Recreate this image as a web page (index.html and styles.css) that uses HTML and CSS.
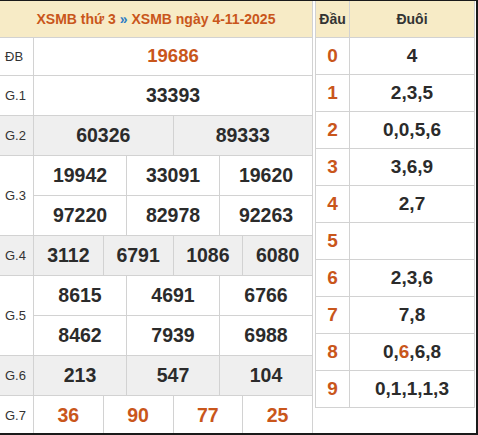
FILE: index.html
```html
<!DOCTYPE html>
<html>
<head>
<meta charset="utf-8">
<link rel="stylesheet" href="styles.css">
</head>
<body>
<div class="frame">
  <table class="kq">
    <colgroup>
      <col class="c-lbl">
      <col><col><col><col><col><col><col><col><col><col><col><col>
    </colgroup>
    <tr class="head"><th colspan="13">XSMB thứ 3 <span class="sep">»</span> XSMB ngày 4-11-2025</th></tr>
    <tr class="r-db"><td class="lbl">ĐB</td><td colspan="12" class="num red db">19686</td></tr>
    <tr><td class="lbl">G.1</td><td colspan="12" class="num">33393</td></tr>
    <tr class="gray"><td class="lbl">G.2</td><td colspan="6" class="num">60326</td><td colspan="6" class="num">89333</td></tr>
    <tr><td class="lbl" rowspan="2">G.3</td><td colspan="4" class="num">19942</td><td colspan="4" class="num">33091</td><td colspan="4" class="num">19620</td></tr>
    <tr><td colspan="4" class="num">97220</td><td colspan="4" class="num">82978</td><td colspan="4" class="num">92263</td></tr>
    <tr class="gray"><td class="lbl">G.4</td><td colspan="3" class="num">3112</td><td colspan="3" class="num">6791</td><td colspan="3" class="num">1086</td><td colspan="3" class="num">6080</td></tr>
    <tr><td class="lbl" rowspan="2">G.5</td><td colspan="4" class="num">8615</td><td colspan="4" class="num">4691</td><td colspan="4" class="num">6766</td></tr>
    <tr><td colspan="4" class="num">8462</td><td colspan="4" class="num">7939</td><td colspan="4" class="num">6988</td></tr>
    <tr class="gray"><td class="lbl">G.6</td><td colspan="4" class="num">213</td><td colspan="4" class="num">547</td><td colspan="4" class="num">104</td></tr>
    <tr><td class="lbl">G.7</td><td colspan="3" class="num red">36</td><td colspan="3" class="num red">90</td><td colspan="3" class="num red">77</td><td colspan="3" class="num red">25</td></tr>
  </table>
  <table class="loto">
    <colgroup><col class="c-dau"><col></colgroup>
    <tr class="head"><th>Đầu</th><th>Đuôi</th></tr>
    <tr><td class="dau">0</td><td class="duoi">4</td></tr>
    <tr><td class="dau">1</td><td class="duoi">2,3,5</td></tr>
    <tr><td class="dau">2</td><td class="duoi">0,0,5,6</td></tr>
    <tr><td class="dau">3</td><td class="duoi">3,6,9</td></tr>
    <tr><td class="dau">4</td><td class="duoi">2,7</td></tr>
    <tr><td class="dau">5</td><td class="duoi"></td></tr>
    <tr><td class="dau">6</td><td class="duoi">2,3,6</td></tr>
    <tr><td class="dau">7</td><td class="duoi">7,8</td></tr>
    <tr><td class="dau">8</td><td class="duoi">0,<span class="hl">6</span>,6,8</td></tr>
    <tr><td class="dau">9</td><td class="duoi">0,1,1,1,3</td></tr>
  </table>
</div>
</body>
</html>
```

FILE: styles.css
```css
* { box-sizing: border-box; }
html, body { margin: 0; padding: 0; background: #fff; }
body { font-family: "Liberation Sans", Arial, sans-serif; color: #333; }

.frame {
  width: 478px;
  height: 435px;
  border-top: 1px solid #1a1a1a;
  border-right: 2px solid #1a1a1a;
  border-bottom: 2px solid #1a1a1a;
  overflow: hidden;
  display: flex;
  align-items: flex-start;
  gap: 2px;
}

table {
  border-collapse: collapse;
  table-layout: fixed;
}

td, th {
  border: 1px solid #d2d2d2;
  padding: 0;
  text-align: center;
  vertical-align: middle;
}

.kq { width: 314px; flex: none; margin-left: -1px; }
.kq .c-lbl { width: 34px; }
.kq tr { height: 40px; }
.kq tr.head { height: 36px; }
.kq tr.r-db { height: 38px; }
.kq tr:first-child th { border-top: none; }

.head th {
  background: #f7ebc6;
  color: #c9561b;
  font-weight: bold;
  font-size: 14px;
}
.head .sep { color: #2d7dc4; }

.lbl {
  font-size: 13px;
  text-align: left;
  padding-left: 5px;
  color: #333;
  font-weight: normal;
}

.num {
  font-size: 19.5px;
  font-weight: bold;
  color: #2b2b2b;
}
.num.red { color: #c9561b; }
.num.db { font-size: 18.5px; }
.gray td { background: #efefef; }

.loto { width: 160px; flex: none; }
.loto .c-dau { width: 34px; }
.loto tr { height: 37px; }
.loto tr.head { height: 36px; }
.loto tr:first-child th { border-top: none; }
.loto .head th { color: #333; font-size: 14px; }
.dau { color: #c9561b; font-weight: bold; font-size: 19px; }
.duoi { color: #2b2b2b; font-weight: bold; font-size: 19px; }
.hl { color: #c9561b; }
```
